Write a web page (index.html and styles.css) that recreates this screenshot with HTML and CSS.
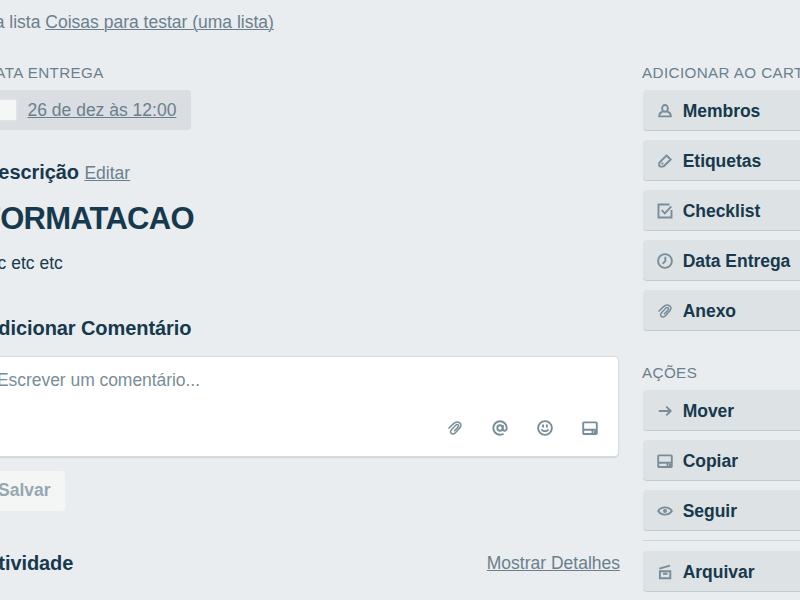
FILE: index.html
```html
<!DOCTYPE html>
<html lang="pt-BR">
<head>
<meta charset="utf-8">
<title>Cartão</title>
<link rel="stylesheet" href="styles.css">
</head>
<body>
<svg class="defs" aria-hidden="true">
  <symbol id="clip" viewBox="0 0 16 16"><path d="M1.500 8.500 6 4.100C8.300 2 11 1.700 12.800 2.800C14.600 4 14.100 6.500 12.500 8.300L8.700 12.600C7.100 14.400 4.900 14.300 4 13C3.100 11.700 3.700 10.500 4.700 9.400L8.700 5.300C9.800 4.300 11 4.400 11.400 5.200C11.900 6.100 11.300 6.900 10.600 7.600L7 11.300" stroke-width="1.500"/></symbol>
  <symbol id="at" viewBox="0 0 16 16"><circle cx="8" cy="8" r="2.700"/><path d="M10.800 5v4.300c0 2.200 3.900 2 3.900-1.300A6.700 6.700 0 1 0 8 14.700c1.300 0 2.500-.3 3.600-1"/></symbol>
  <symbol id="smile" viewBox="0 0 16 16"><circle cx="8" cy="8" r="6.900"/><path d="M6.100 4.500v3M9.900 4.500v3M4.500 9.300c1.300 2.600 5.700 2.600 7 0"/></symbol>
  <symbol id="card" viewBox="0 0 16 16"><rect x="1.200" y="2.400" width="13.600" height="11.600" rx=".8"/><path d="M1.200 9.700H15M10.500 9.700v4M12 12h2"/></symbol>
  <symbol id="member" viewBox="0 0 16 16"><ellipse cx="8" cy="5.400" rx="2.900" ry="3.400"/><path d="M5.700 8.700C3.300 9.200 2.200 10.500 2.200 13.400h11.600c0-2.900-1.100-4.200-3.500-4.700"/></symbol>
  <symbol id="tag" viewBox="0 0 16 16"><path d="M9.500 2.500 13.700 6.500 7.300 12.800Q6.500 13.600 5.200 13.600H3.200Q2.200 13.600 2.200 12.500V10.700Q2.200 9.700 3 9Z"/><circle class="solid" cx="5.400" cy="10.600" r="1.100"/></symbol>
  <symbol id="check" viewBox="0 0 16 16"><path d="M12.500 1.500H1.500v13h13V7M4.700 7.200 7.800 10.300 14.300 3.300"/></symbol>
  <symbol id="clock" viewBox="0 0 16 16"><circle cx="8" cy="8" r="6.900"/><path d="M8.300 3.800v4.400L5.600 10.700"/></symbol>
  <symbol id="arrow" viewBox="0 0 16 16"><path d="M1.800 8h11.500M9.300 3.600 13.700 8 9.300 12.400"/></symbol>
  <symbol id="eye" viewBox="0 0 16 16"><path d="M1.200 8C4 3.200 12 3.200 14.800 8C12 12.800 4 12.800 1.200 8Z"/><circle class="solid" cx="8" cy="8" r="2"/></symbol>
  <symbol id="archive" viewBox="0 0 16 16"><path d="M2.300 4.700 13 1.700M2.900 7.200h10.400v7H2.900ZM6 9.800h4.500"/></symbol>
</svg>

<div class="window">
  <main class="main">
    <p class="location">na lista <a>Coisas para testar (uma lista)</a></p>

    <h3 class="label">Data Entrega</h3>
    <div class="due"><span class="due-check"></span><a>26 de dez às 12:00</a></div>

    <div class="heading heading-description"><h2>Descrição</h2><a>Editar</a></div>
    <div class="description">
      <h1>FORMATACAO</h1>
      <p>etc etc etc</p>
    </div>

    <div class="heading heading-comment"><h2>Adicionar Comentário</h2></div>
    <div class="comment">
      <p>Escrever um comentário...</p>
      <div class="tools">
        <svg><use href="#clip"/></svg>
        <svg><use href="#at"/></svg>
        <svg><use href="#smile"/></svg>
        <svg><use href="#card"/></svg>
      </div>
    </div>
    <button class="save" disabled>Salvar</button>

    <div class="heading heading-activity"><h2>Atividade</h2><a>Mostrar Detalhes</a></div>
  </main>

  <aside class="sidebar">
    <h3 class="label">Adicionar ao Cartão</h3>
    <div class="buttons">
      <a class="button"><svg><use href="#member"/></svg>Membros</a>
      <a class="button"><svg><use href="#tag"/></svg>Etiquetas</a>
      <a class="button"><svg><use href="#check"/></svg>Checklist</a>
      <a class="button"><svg><use href="#clock"/></svg>Data Entrega</a>
      <a class="button"><svg><use href="#clip"/></svg>Anexo</a>
    </div>
    <h3 class="label">Ações</h3>
    <div class="buttons">
      <a class="button"><svg><use href="#arrow"/></svg>Mover</a>
      <a class="button"><svg><use href="#card"/></svg>Copiar</a>
      <a class="button"><svg><use href="#eye"/></svg>Seguir</a>
      <hr>
      <a class="button"><svg><use href="#archive"/></svg>Arquivar</a>
    </div>
  </aside>
</div>
</body>
</html>
```

FILE: styles.css
```css
* { box-sizing: border-box; }

html, body { height: 100%; overflow: hidden; }

body {
  margin: 0;
  background: #e9edf0;
  color: #17394d;
  font: 17.5px/25px "Liberation Sans", Arial, sans-serif;
}

h1, h2, h3, p { margin: 0; }

.defs { display: none; }

svg {
  width: 16px;
  height: 16px;
  flex: none;
  fill: none;
  stroke: #798d99;
  stroke-width: 1.9;
}

.solid { fill: #798d99; stroke: none; }

.window {
  display: flex;
  gap: 23px;
  width: 876px;
  margin-left: -16px;
  padding-top: 10px;
}

.main { width: 636px; flex: none; }

.location, .main a { color: #6b808c; }

.location { padding-left: 1px; }

.main a { text-decoration: underline; text-underline-offset: 1px; text-decoration-thickness: 1px; }

.label {
  height: 25px;
  color: #6b808c;
  font-size: 15.2px;
  font-weight: 400;
  letter-spacing: .4px;
  text-transform: uppercase;
  white-space: nowrap;
}

.main .label { margin: 25px 0 5px; }

.due {
  display: flex;
  align-items: center;
  gap: 9.500px;
  width: 207px;
  height: 40px;
  padding-left: 13px;
  border-radius: 3px;
  background: #dadde2;
}

.due-check {
  width: 21px;
  height: 24px;
  border: 2px solid #dfe3e6;
  border-radius: 3px;
  background: #f5f6f6;
}

.heading { display: flex; align-items: baseline; height: 25px; }
.heading h2 { font-size: 20px; line-height: 25px; font-weight: 700; letter-spacing: -.08px; }
.heading-description { gap: 5.500px; margin-top: 30px; }
.heading-comment { margin-top: 40px; }
.heading-activity { align-items: flex-start; justify-content: space-between; margin-top: 40px; }

.description { padding-top: 16px; }
.description h1 { margin: 0 0 14px -2px; font-size: 31px; line-height: 36px; letter-spacing: -.75px; }
.description p { margin-left: -1px; }

.comment {
  display: flex;
  flex-direction: column;
  justify-content: space-between;
  width: 634px;
  height: 99px;
  margin-top: 16px;
  padding: 11px 20px 20px 13px;
  border-radius: 4px;
  background: #fff;
  box-shadow: 0 0 0 1px #d5dde1, 0 1px 1px 1px #cbd4d8;
  color: #798d99;
  letter-spacing: -.05px;
}

.tools { display: flex; justify-content: flex-end; gap: 29px; }

.save {
  display: block;
  width: 81px;
  height: 40px;
  margin-top: 15px;
  padding: 0 14px 2px;
  border: 0;
  border-radius: 4px;
  background: #f4f6f6;
  color: #97a8b1;
  font: 700 17.5px/25px "Liberation Sans", Arial, sans-serif;
  text-align: left;
}

.sidebar { width: 210px; padding-top: 50px; }

.sidebar .label { margin-left: -1px; margin-bottom: 5px; }

.buttons { display: flex; flex-direction: column; gap: 10px; margin-bottom: 30px; }

.button {
  display: flex;
  align-items: center;
  gap: 9.700px;
  height: 40px;
  padding: 2px 14px 0;
  border-radius: 4px;
  background: #dde2e4;
  box-shadow: 0 1px 0 #c1ccd1;
  font-weight: 700;
  letter-spacing: -.03px;
}

.button svg { margin-bottom: 1px; }

.buttons hr { width: 100%; height: 1px; margin: 0; border: 0; background: #cbd3d8; }
```
